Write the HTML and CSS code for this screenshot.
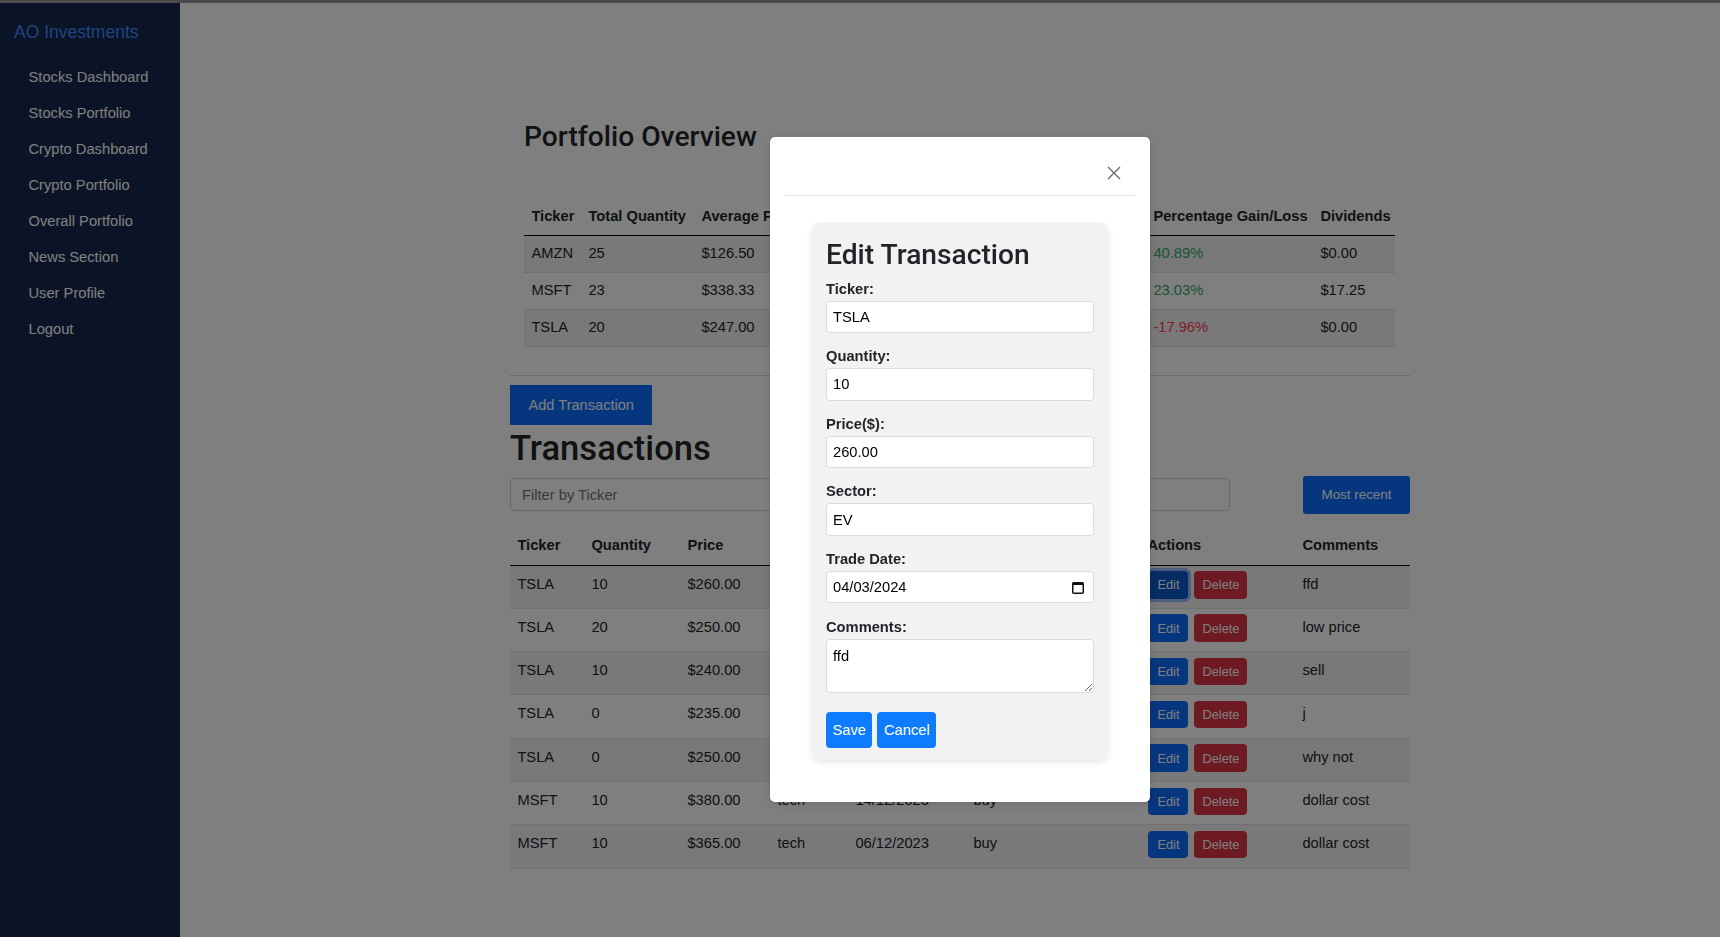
FILE: index.html
```html
<!DOCTYPE html>
<html lang="en">
<head>
<meta charset="utf-8">
<title>AO Investments - Stocks Portfolio</title>
<link rel="stylesheet" href="styles.css">
</head>
<body>
<div class="app">
  <aside class="sidebar">
    <div class="brand">AO Investments</div>
    <nav class="nav">
      <a class="nav-link">Stocks Dashboard</a>
      <a class="nav-link">Stocks Portfolio</a>
      <a class="nav-link">Crypto Dashboard</a>
      <a class="nav-link">Crypto Portfolio</a>
      <a class="nav-link">Overall Portfolio</a>
      <a class="nav-link">News Section</a>
      <a class="nav-link">User Profile</a>
      <a class="nav-link">Logout</a>
    </nav>
  </aside>

  <main class="main">
    <div class="container">
      <section class="overview">
        <h2 class="overview-title">Portfolio Overview</h2>
        <table class="table overview-table">
          <colgroup>
            <col class="c-o1"><col class="c-o2"><col class="c-o3"><col class="c-o3"><col class="c-o3"><col class="c-o3"><col class="c-o4"><col class="c-o5">
          </colgroup>
          <thead>
            <tr><th>Ticker</th><th>Total Quantity</th><th>Average Price</th><th>Current Price</th><th>Total Value</th><th>Gain/Loss</th><th>Percentage Gain/Loss</th><th>Dividends</th></tr>
          </thead>
          <tbody>
            <tr><td>AMZN</td><td>25</td><td>$126.50</td><td>$178.22</td><td>$4,455.50</td><td>$1,293.00</td><td class="gain">40.89%</td><td>$0.00</td></tr>
            <tr><td>MSFT</td><td>23</td><td>$338.33</td><td>$416.26</td><td>$9,573.98</td><td>$1,792.39</td><td class="gain">23.03%</td><td>$17.25</td></tr>
            <tr><td>TSLA</td><td>20</td><td>$247.00</td><td>$202.64</td><td>$4,052.80</td><td>-$887.20</td><td class="loss">-17.96%</td><td>$0.00</td></tr>
          </tbody>
        </table>
      </section>

      <hr class="divider">

      <button class="btn btn-primary btn-add">Add Transaction</button>
      <h1 class="tx-title">Transactions</h1>

      <div class="filter-row">
        <input class="form-control filter-input" type="text" placeholder="Filter by Ticker">
        <button class="btn btn-primary btn-sort">Most recent</button>
      </div>

      <table class="table tx-table">
        <colgroup>
          <col class="c-t1"><col class="c-t2"><col class="c-t3"><col class="c-t4"><col class="c-t5"><col class="c-t6"><col class="c-t7"><col class="c-t8">
        </colgroup>
        <thead>
          <tr><th>Ticker</th><th>Quantity</th><th>Price</th><th>Sector</th><th>Date</th><th>Type</th><th>Actions</th><th>Comments</th></tr>
        </thead>
        <tbody>
          <tr><td>TSLA</td><td>10</td><td>$260.00</td><td>EV</td><td>04/03/2024</td><td>buy</td><td class="act"><div class="actions"><button class="btn-sm btn-edit is-active">Edit</button><button class="btn-sm btn-delete">Delete</button></div></td><td>ffd</td></tr>
          <tr><td>TSLA</td><td>20</td><td>$250.00</td><td>EV</td><td>21/02/2024</td><td>buy</td><td class="act"><div class="actions"><button class="btn-sm btn-edit">Edit</button><button class="btn-sm btn-delete">Delete</button></div></td><td>low price</td></tr>
          <tr><td>TSLA</td><td>10</td><td>$240.00</td><td>EV</td><td>15/01/2024</td><td>sell</td><td class="act"><div class="actions"><button class="btn-sm btn-edit">Edit</button><button class="btn-sm btn-delete">Delete</button></div></td><td>sell</td></tr>
          <tr><td>TSLA</td><td>0</td><td>$235.00</td><td>EV</td><td>08/01/2024</td><td>buy</td><td class="act"><div class="actions"><button class="btn-sm btn-edit">Edit</button><button class="btn-sm btn-delete">Delete</button></div></td><td>j</td></tr>
          <tr><td>TSLA</td><td>0</td><td>$250.00</td><td>EV</td><td>02/01/2024</td><td>buy</td><td class="act"><div class="actions"><button class="btn-sm btn-edit">Edit</button><button class="btn-sm btn-delete">Delete</button></div></td><td>why not</td></tr>
          <tr><td>MSFT</td><td>10</td><td>$380.00</td><td>tech</td><td>14/12/2023</td><td>buy</td><td class="act"><div class="actions"><button class="btn-sm btn-edit">Edit</button><button class="btn-sm btn-delete">Delete</button></div></td><td>dollar cost</td></tr>
          <tr><td>MSFT</td><td>10</td><td>$365.00</td><td>tech</td><td>06/12/2023</td><td>buy</td><td class="act"><div class="actions"><button class="btn-sm btn-edit">Edit</button><button class="btn-sm btn-delete">Delete</button></div></td><td>dollar cost</td></tr>
        </tbody>
      </table>
    </div>
  </main>
</div>

<div class="backdrop"></div>

<div class="modal" role="dialog">
  <div class="modal-header">
    <button class="btn-close" aria-label="Close">
      <svg width="14" height="14" viewBox="0 0 14 14"><path d="M1 1 L13 13 M13 1 L1 13" stroke="#6b6b6b" stroke-width="1.4" fill="none"/></svg>
    </button>
  </div>
  <div class="modal-body">
    <div class="edit-card">
      <h2 class="edit-title">Edit Transaction</h2>
      <div class="field">
        <label>Ticker:</label>
        <input class="input" type="text" value="TSLA">
      </div>
      <div class="field">
        <label>Quantity:</label>
        <input class="input" type="text" value="10">
      </div>
      <div class="field">
        <label>Price($):</label>
        <input class="input" type="text" value="260.00">
      </div>
      <div class="field">
        <label>Sector:</label>
        <input class="input" type="text" value="EV">
      </div>
      <div class="field">
        <label>Trade Date:</label>
        <div class="input date-field">
          <input class="date-text" type="text" value="04/03/2024">
          <svg class="cal-icon" width="12" height="13" viewBox="0 0 12 13"><rect x="0.75" y="1.75" width="10.5" height="10.5" rx="1" fill="none" stroke="#111" stroke-width="1.5"/><rect x="0.75" y="1.5" width="10.5" height="2.5" fill="#111"/></svg>
        </div>
      </div>
      <div class="field field-last">
        <label>Comments:</label>
        <textarea class="input textarea">ffd</textarea>
      </div>
      <div class="form-actions">
        <button class="btn-modal">Save</button>
        <button class="btn-modal">Cancel</button>
      </div>
    </div>
  </div>
</div>
</body>
</html>
```

FILE: styles.css
```css
* { box-sizing: border-box; }

html, body {
  margin: 0;
  height: 100%;
}

body {
  font-family: "Liberation Sans", Arial, sans-serif;
  font-size: 14.7px;
  line-height: 21px;
  color: #212529;
  background: #ffffff;
  border-top: 3px solid #4b4b4b;
  overflow: hidden;
}

.app {
  display: flex;
  height: 934px;
}

/* Sidebar */
.sidebar {
  width: 180px;
  flex: 0 0 180px;
  background: #17284c;
  padding: 18px 0 0 14px;
}

.brand {
  font-size: 17.5px;
  line-height: 22px;
  color: #3d8bfd;
}

.nav {
  display: flex;
  flex-direction: column;
  margin-top: 16px;
}

.nav-link {
  display: block;
  padding: 7px 0 7px 14.5px;
  line-height: 22px;
  font-size: 14.7px;
  color: #ffffff;
  text-decoration: none;
}

/* Main */
.main {
  flex: 1;
  padding: 117px 0 0 20px;
}

.container {
  width: 900px;
  margin: 0 auto;
}

.overview {
  padding: 0 15px 0 14px;
}

.overview-title {
  font-family: Roboto, "Liberation Sans", sans-serif;
  font-size: 28.2px;
  line-height: 33.6px;
  font-weight: 500;
  margin: 0 0 45px;
}

.table {
  width: 100%;
  border-collapse: collapse;
  table-layout: fixed;
}

.table th {
  text-align: left;
  font-weight: 700;
  white-space: nowrap;
  overflow: hidden;
  border-bottom: 1px solid #000000;
}

.table td {
  vertical-align: top;
  border-bottom: 1px solid #dee2e6;
  white-space: nowrap;
}

.table tbody tr:nth-child(odd) td {
  background: #f2f2f2;
}

.overview-table th,
.overview-table td {
  padding: 7.5px 7.4px;
}

.c-o1 { width: 57px; }
.c-o2 { width: 113px; }
.c-o3 { width: 113px; }
.c-o4 { width: 167px; }
.c-o5 { width: 82px; }

.gain { color: #2fa86c; }
.loss { color: #ff3b55; }

.divider {
  border: 0;
  border-top: 1px solid #dadada;
  margin: 28.5px 0 0;
}

.btn {
  font-family: inherit;
  cursor: pointer;
}

.btn-primary {
  background: #0d6efd;
  color: #ffffff;
  border: 0;
}

.btn-add {
  display: block;
  margin-top: 9px;
  font-size: 14.6px;
  line-height: 21px;
  padding: 9.5px 18.5px;
  border-radius: 0;
}

.tx-title {
  font-family: Roboto, "Liberation Sans", sans-serif;
  font-size: 34.6px;
  line-height: 42px;
  font-weight: 500;
  margin: 2px 0 0;
}

.filter-row {
  display: flex;
  align-items: center;
  justify-content: space-between;
  margin-top: 6.5px;
  height: 38px;
}

.form-control {
  font-family: inherit;
  font-size: 14.7px;
  color: #212529;
  border: 1px solid #ced4da;
  border-radius: 4px;
  background: #ffffff;
}

.filter-input {
  width: 720px;
  height: 33px;
  padding: 0 11px;
}

.filter-input::placeholder {
  color: #6c757d;
}

.btn-sort {
  width: 107px;
  height: 38px;
  font-size: 13.4px;
  border-radius: 3px;
  padding: 0;
}

.tx-table {
  margin-top: 13px;
}

.tx-table th {
  padding: 8.5px 7.4px;
}

.tx-table td {
  padding: 8px 7.4px 6px;
}

.tx-table td.act {
  padding: 5.5px 7.4px 9.3px;
}

.c-t1 { width: 74px; }
.c-t2 { width: 96px; }
.c-t3 { width: 90px; }
.c-t4 { width: 78px; }
.c-t5 { width: 118px; }
.c-t6 { width: 174px; }
.c-t7 { width: 155px; }
.c-t8 { width: 115px; }

.actions {
  display: flex;
  gap: 6px;
  padding-left: 1px;
}

.btn-sm {
  font-family: inherit;
  font-size: 12.8px;
  height: 27.5px;
  padding: 0 8px;
  border: 1px solid transparent;
  border-radius: 3.5px;
  color: #ffffff;
  cursor: pointer;
}

.btn-edit {
  background: #0d6efd;
  border-color: #0d6efd;
}

.btn-edit.is-active {
  background: #0a58ca;
  border-color: #0a53be;
  box-shadow: 0 0 0 3px rgba(49, 132, 253, 0.5);
}

.btn-delete {
  background: #dc3545;
  border-color: #dc3545;
  padding: 0 7px;
}

/* Backdrop and modal */
.backdrop {
  position: fixed;
  top: 3px;
  left: 0;
  right: 0;
  bottom: 0;
  background: rgba(0, 0, 0, 0.5);
}

.modal {
  position: fixed;
  left: 770px;
  top: 137px;
  width: 380px;
  background: #ffffff;
  border-radius: 5px;
  padding: 0 15px 15px;
  box-shadow: 0 2px 10px rgba(0, 0, 0, 0.15);
}

.modal-header {
  display: flex;
  justify-content: flex-end;
  align-items: flex-start;
  height: 59px;
  padding: 29px 14px 0 0;
  border-bottom: 1px solid #dee2e6;
}

.btn-close {
  display: block;
  width: 14px;
  height: 14px;
  padding: 0;
  border: 0;
  background: transparent;
  cursor: pointer;
}

.btn-close svg {
  display: block;
}

.modal-body {
  padding: 27px;
}

.edit-card {
  background: #f2f2f2;
  border-radius: 8px;
  padding: 15px 14px 12px;
  box-shadow: 0 2px 6px rgba(0, 0, 0, 0.1);
}

.edit-title {
  font-family: Roboto, "Liberation Sans", sans-serif;
  font-size: 28.2px;
  line-height: 33.6px;
  font-weight: 500;
  margin: 0 0 7px;
  color: #212529;
}

.field {
  display: flex;
  flex-direction: column;
  margin-bottom: 13.1px;
}

.field-last {
  margin-bottom: 19px;
}

.field label {
  font-weight: 700;
  font-size: 14.7px;
  line-height: 20px;
  margin-bottom: 2px;
  color: #212529;
}

.input {
  height: 32.5px;
  width: 100%;
  font-family: inherit;
  font-size: 14.7px;
  color: #000000;
  background: #ffffff;
  border: 1px solid #dcdcdc;
  border-radius: 4px;
  padding: 0 6px;
}

.date-field {
  display: flex;
  align-items: center;
  padding: 0 9px 0 6px;
}

.date-text {
  flex: 1;
  min-width: 0;
  border: 0;
  padding: 0;
  outline: none;
  font-family: inherit;
  font-size: 14.7px;
  color: #000000;
  background: transparent;
}

.cal-icon {
  flex: 0 0 auto;
  display: block;
}

.textarea {
  height: 54px;
  padding: 6px;
  line-height: 21px;
  resize: vertical;
}

.form-actions {
  display: flex;
  gap: 5px;
}

.btn-modal {
  font-family: inherit;
  font-size: 14.7px;
  line-height: 22px;
  height: 36px;
  padding: 0 6.5px;
  background: #0f7bff;
  color: #ffffff;
  border: 0;
  border-radius: 4px;
  cursor: pointer;
}
```
